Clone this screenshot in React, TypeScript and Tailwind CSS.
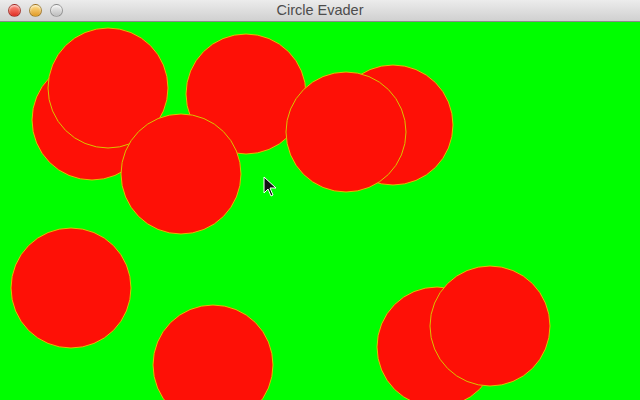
import React from "react"

const circles = [
  { cx: 92, cy: 98 },
  { cx: 108, cy: 66 },
  { cx: 246, cy: 72 },
  { cx: 181, cy: 152 },
  { cx: 393, cy: 103 },
  { cx: 346, cy: 110 },
  { cx: 71, cy: 266 },
  { cx: 213, cy: 343 },
  { cx: 437, cy: 325 },
  { cx: 490, cy: 304 },
]

function Light({ color }: { color: string }) {
  return (
    <span
      className={`w-[13px] h-[13px] rounded-full border border-black/30 ${color} shadow-[inset_0_1px_2px_rgba(255,255,255,0.7)]`}
    />
  )
}

export default function App() {
  return (
    <div className="w-[640px] h-[400px] flex flex-col overflow-hidden bg-[#00fe00]">
      {/* title bar */}
      <div className="relative h-[22px] shrink-0 flex items-center bg-gradient-to-b from-[#ececec] to-[#d0d0d0] border-b border-[#8a8a8a]">
        <div className="flex items-center gap-[8px] pl-[8px]">
          <Light color="bg-gradient-to-b from-[#ff8a80] to-[#e0241c]" />
          <Light color="bg-gradient-to-b from-[#ffe08a] to-[#e09a1a]" />
          <Light color="bg-gradient-to-b from-[#f2f2f2] to-[#bdbdbd]" />
        </div>
        <div className="absolute inset-0 flex items-center justify-center text-[14.5px] text-[#4d4d4d] font-['Liberation_Sans',sans-serif]">
          Circle Evader
        </div>
      </div>

      {/* game canvas */}
      <div className="flex-1 relative">
        <svg width="640" height="378" className="block">
          <rect width="640" height="378" fill="#00fe00" />
          {circles.map((c, i) => (
            <circle key={i} cx={c.cx} cy={c.cy} r={60} fill="#fe1006" stroke="#d8c400" strokeWidth={1} />
          ))}
          <path
            d="M264 155 L264 171 L268 167 L271 174 L273 173 L270 166 L276 166 Z"
            fill="#111"
            stroke="#fff"
            strokeWidth={1}
            strokeLinejoin="round"
          />
        </svg>
      </div>
    </div>
  )
}
